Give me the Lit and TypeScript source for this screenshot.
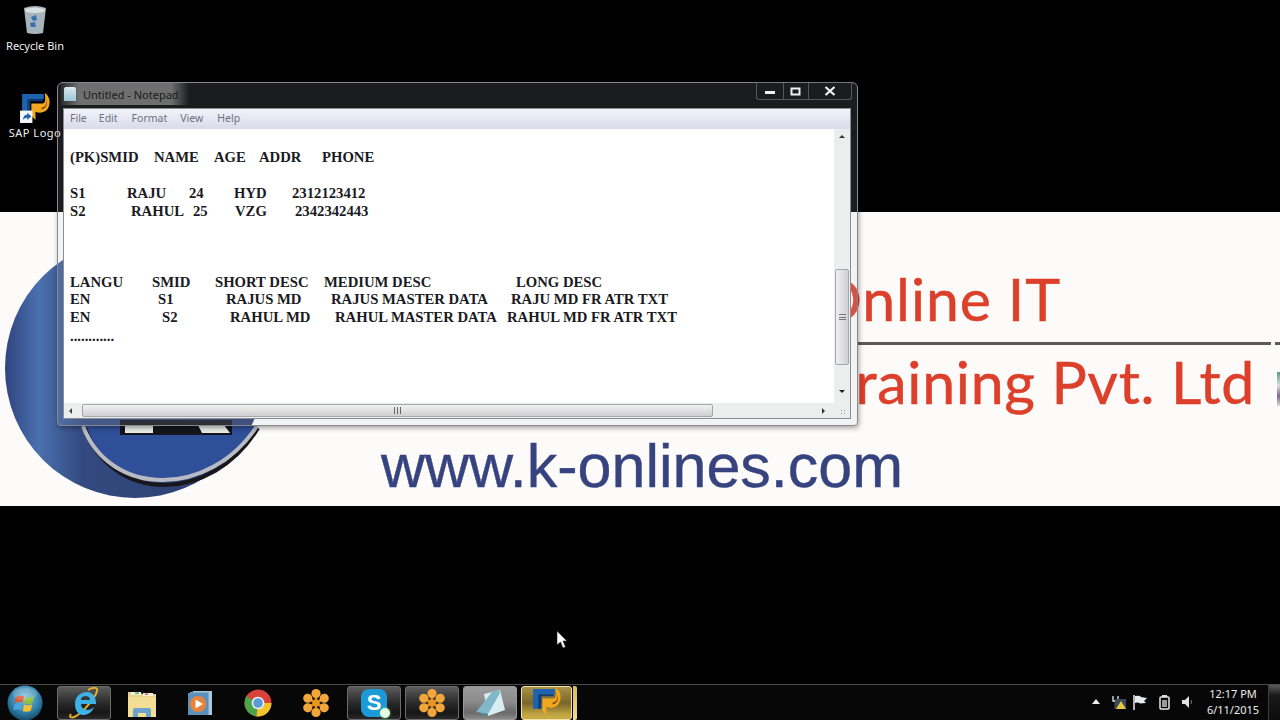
import { LitElement, html, css, svg } from "lit";
import { customElement } from "lit/decorators.js";

type Row = { top: number; cells: [number, string][] };
const ROWS: Row[] = [
  { top: -1, cells: [[70, "(PK)SMID"], [154, "NAME"], [214, "AGE"], [259, "ADDR"], [322, "PHONE"]] },
  { top: 18, cells: [[70, "S1"], [127, "RAJU"], [189, "24"], [234, "HYD"], [292, "2312123412"]] },
  { top: 0, cells: [[70, "S2"], [131, "RAHUL"], [193, "25"], [235, "VZG"], [295, "2342342443"]] },
  { top: 53, cells: [[70, "LANGU"], [152, "SMID"], [215, "SHORT DESC"], [324, "MEDIUM DESC"], [516, "LONG DESC"]] },
  { top: -1, cells: [[70, "EN"], [158, "S1"], [226, "RAJUS MD"], [331, "RAJUS MASTER DATA"], [511, "RAJU MD FR ATR TXT"]] },
  { top: 0, cells: [[70, "EN"], [162, "S2"], [230, "RAHUL MD"], [335, "RAHUL MASTER DATA"], [507, "RAHUL MD FR ATR TXT"]] },
  { top: 1, cells: [[70, "............"]] },
];

const flower = svg`<svg width="30" height="30" viewBox="0 0 30 30">
  ${[0, 60, 120, 180, 240, 300].map((a) => svg`<g transform="rotate(${a} 15 15)"><rect x="13.6" y="6" width="2.8" height="9" fill="#d98a1e"/><circle cx="15" cy="5.5" r="4.6" fill="#f0a63a"/></g>`)}
  <circle cx="15" cy="15" r="3.6" fill="#e8951f"/></svg>`;

const orb = svg`<svg width="36" height="36" viewBox="0 0 36 36">
  <defs><radialGradient id="o" cx=".5" cy=".35" r=".7"><stop offset="0" stop-color="#8fc6e0"/><stop offset=".6" stop-color="#2f7fa8"/><stop offset="1" stop-color="#123f5e"/></radialGradient></defs>
  <circle cx="18" cy="18" r="17.5" fill="url(#o)"/>
  <path d="M9 12q4-2 8-.5l-1.300 6q-4-1.500-8 .5z" fill="#e2572c"/>
  <path d="M18.500 11.800q4 1.500 8.500-.3l-1.500 6.500q-4 1.700-8.200.2z" fill="#8fc23c"/>
  <path d="M7.500 19.500q4-2 8-.5l-1.300 6q-4-1.500-8 .5z" fill="#4aa8dc"/>
  <path d="M17 19.700q4 1.500 8.200-.2l-1.400 6.300q-4 1.700-8.200.2z" fill="#f4c22c"/>
  <ellipse cx="18" cy="9" rx="12" ry="6.500" fill="#fff" opacity=".16"/></svg>`;

const ie = svg`<svg width="34" height="32" viewBox="0 0 34 32">
  <path d="M4 27C1 31 6 32 12 27 20 21 29 9 30 4 31 0 26 0 21 3" fill="none" stroke="#e0b030" stroke-width="2"/>
  <path d="M8 17C8 9 14 5 20 5c6 0 9 5 9 12H14c0 6 8 8 13 3-2 6-7 8-11 8-5 0-8-5-8-11zM14 13h9c0-3-2-4-4.500-4S14 10 14 13z" fill="#3db2e6"/></svg>`;

const folder = svg`<svg width="32" height="32" viewBox="0 0 32 32">
  <path d="M2 5h12l2 2h14v23H2z" fill="#e9d28c"/>
  <rect x="5" y="5" width="10" height="3" fill="#eef0e0"/><rect x="9" y="5.500" width="4" height="1.500" fill="#5cab58"/>
  <rect x="17" y="6" width="10" height="3" fill="#f2f2e6"/><rect x="19" y="6.500" width="3" height="1.500" fill="#d8603c"/>
  <rect x="2" y="10" width="28" height="20" fill="#f4dd94"/>
  <path d="M7 30v-7q0-2 2-2h14q2 0 2 2v7h-5v-4h-8v4z" fill="#6ba4cc"/></svg>`;

const wmp = svg`<svg width="28" height="28" viewBox="0 0 28 28">
  <rect x="7" y="2" width="19" height="24" fill="#a9c6dc"/><rect x="4" y="3" width="19" height="23" fill="#7fa9c9"/>
  <rect x="2" y="4" width="20" height="22" fill="#5d90b8"/>
  <circle cx="12" cy="15" r="8" fill="#e8843a"/><path d="M9.500 10.500l7.500 4.500-7.500 4.500z" fill="#fff"/></svg>`;

const chrome = svg`<svg width="28" height="28" viewBox="0 0 28 28">
  <circle cx="14" cy="14" r="13.500" fill="#d8423a"/>
  <path d="M14 14L2.300 7.300A13.500 13.500 0 0 0 12.500 27.400z" fill="#4ba34a"/>
  <path d="M14 14H27.500A13.500 13.500 0 0 1 12.500 27.400z" fill="#f0c52c"/>
  <circle cx="14" cy="14" r="6.300" fill="#eef2f6"/><circle cx="14" cy="14" r="4.800" fill="#5c9ad8"/></svg>`;

const notepad = svg`<svg width="34" height="30" viewBox="0 0 34 30">
  <path d="M11 6L27 2l5 20-17 6z" fill="#d8ecf2"/>
  <path d="M3 24L19 4l7-2 1 3-12 21z" fill="#7fb8c8"/>
  <path d="M3 24l12 2-1 2z" fill="#4d8a9c"/></svg>`;

const sapLogo = (s: number, shortcut = false) => svg`<svg width="${s}" height="${s}" viewBox="0 0 32 32">
  <path d="M3 3h21v5H9v14H3z" fill="#1d63b0"/>
  <path d="M8 8h15v2H11v12H8z" fill="#0f3c78"/>
  <path d="M25 2c5 3 6 10 3 15-2 4-8 5-12 3v8l-4-4V12h11c2 0 3-2 2-10z" fill="#f2a81e"/>
  <path d="M22 16c3 0 5-3 5-8 1 5-1 9-5 10z" fill="#7a3d08"/>
  ${shortcut ? svg`<rect x="1" y="19" width="12" height="12" fill="#f4f6fa"/><path d="M4 28c0-4 2-5 4-5v-2l4 3.500-4 3.500v-2c-1 0-3 .5-4 2z" fill="#1d63b0"/>` : ""}</svg>`;

@customElement("app-root")
export class AppRoot extends LitElement {
  static styles = css`
    :host { display: flex; flex-direction: column; width: 1280px; height: 720px; overflow: hidden; background: #000; font-family: "Noto Sans", sans-serif; }
    .desktop { position: relative; height: 684px; padding-top: 212px; box-sizing: border-box; }

    .banner { position: relative; height: 294px; background: #fcfbfa; overflow: hidden; }
    .logo { position: absolute; left: 0; top: 0; }
    .red { position: absolute; color: #dc3f2a; font-family: Lato, sans-serif; font-size: 59px; line-height: 70px; white-space: nowrap; -webkit-text-stroke: .5px #dc3f2a; }
    .r1 { top: 52px; right: 219px; letter-spacing: .9px; }
    .r2 { top: 135px; right: 25px; letter-spacing: .7px; }
    .tee { margin-right: 14px; }
    .rule { position: absolute; left: 858px; right: 9px; top: 130px; height: 3px; background: #5a5a58; }
    .rule2 { position: absolute; left: 1275px; right: 0; top: 130px; height: 3px; background: #5a5a58; }
    .crumb { position: absolute; left: 1277px; top: 160px; width: 3px; height: 34px; background: linear-gradient(#5a9a8a, #ddd 40%, #7a6a90 70%, #d8d8d8); }
    .url { position: absolute; left: 381px; top: 219px; color: #37437f; font-family: "Liberation Sans", sans-serif; font-size: 61px; line-height: 70px; white-space: nowrap; -webkit-text-stroke: .4px #37437f; }

    .dicon { position: absolute; display: flex; flex-direction: column; align-items: center; width: 70px; color: #f0f0f0; font-size: 11px; line-height: 15px; text-shadow: 0 1px 2px #000; }
    .bin { left: 0; top: 5px; gap: 3px; }
    .sap { left: 0; top: 91px; gap: 1px; letter-spacing: .5px; }

    .win { position: absolute; left: 57px; top: 82px; width: 801px; height: 344px; box-sizing: border-box; border: 1px solid #85888c; border-radius: 6px 6px 4px 4px; background: rgba(190, 200, 212, .14); box-shadow: 1px 2px 5px rgba(0,0,0,.35); display: flex; flex-direction: column; padding: 0 6px 6px 5px; }
    .title { height: 25px; flex: none; display: flex; align-items: flex-start; position: relative; }
    .glow { display: flex; align-items: center; gap: 7px; height: 22px; margin-left: -2px; padding: 0 10px 0 3px; background: linear-gradient(90deg, rgba(110,110,110,.2), rgba(125,125,125,.85) 14%, rgba(125,125,125,.85) 86%, rgba(90,90,90,0)); }
    .nicon { width: 12px; height: 14px; background: linear-gradient(#cfe4ec, #9cc6d6); border-top: 2px solid #dfe8ea; border-radius: 2px 2px 0 0; box-sizing: border-box; }
    .ttext { color: #1a1a1a; font-size: 11px; white-space: nowrap; margin-top: 1px; }
    .caps { position: absolute; right: -1px; top: -1px; display: flex; height: 18px; border: 1px solid #55585c; border-top-color: #777; border-radius: 0 0 3px 3px; box-sizing: border-box; }
    .cap { display: flex; align-items: center; justify-content: center; height: 100%; border-right: 1px solid #55585c; box-sizing: border-box; }
    .cap:last-child { border-right: 0; }
    .client { flex: 1; min-height: 0; border: 1px solid #8a8e94; background: #fff; display: flex; flex-direction: column; }
    .menu { height: 20px; flex: none; display: flex; align-items: center; padding-bottom: 2px; font-size: 10.500px; color: #6e7280; background: linear-gradient(#f2f3fa, #d8dbe9); box-sizing: border-box; }
    .body { flex: 1; min-height: 0; display: flex; }
    .text { flex: 1; min-width: 0; padding-top: 20px; box-sizing: border-box; font-family: "Liberation Serif", serif; font-weight: 700; font-size: 14.700px; line-height: 18px; color: #1a1a22; }
    .row { display: flex; white-space: pre; }
    .row span { flex: none; }
    .vbar { width: 16px; flex: none; background: #eceeee; position: relative; display: flex; flex-direction: column; align-items: center; }
    .arrow-u { margin-top: 6px; width: 0; height: 0; border: 3px solid transparent; border-top: 0; border-bottom: 3px solid #333; }
    .arrow-d { margin-top: 25px; width: 0; height: 0; border: 3px solid transparent; border-bottom: 0; border-top: 3px solid #222; }
    .vthumb { margin-top: 131px; width: 14px; height: 96px; box-sizing: border-box; border: 1px solid #a4a8ac; border-radius: 2px; background: linear-gradient(90deg, #f0f0f0, #d0d0d2); display: flex; align-items: center; justify-content: center; }
    .grip-h { width: 7px; height: 6px; border-top: 1px solid #777; border-bottom: 1px solid #777; box-sizing: border-box; background: linear-gradient(#777,#777) center/100% 1px no-repeat; }
    .hbar { height: 15px; flex: none; background: #eceeee; display: flex; align-items: center; position: relative; }
    .arrow-l { margin-left: 5px; width: 0; height: 0; border: 3px solid transparent; border-left: 0; border-right: 3px solid #444; }
    .hthumb { margin-left: 10px; width: 631px; height: 13px; box-sizing: border-box; border: 1px solid #a4a8ac; border-radius: 2px; background: linear-gradient(#f2f2f2, #cfcfd1); display: flex; align-items: center; justify-content: center; }
    .grip-v { width: 7px; height: 7px; border-left: 1px solid #666; border-right: 1px solid #666; box-sizing: border-box; background: linear-gradient(#666,#666) center/1px 100% no-repeat; }
    .arrow-r { margin-left: 109px; width: 0; height: 0; border: 3px solid transparent; border-right: 0; border-left: 3px solid #333; }
    .sizer { position: absolute; right: 3px; bottom: 2px; width: 7px; height: 7px; background: radial-gradient(circle, #999 40%, transparent 45%) 0 0/3px 3px; }

    .cursor { position: absolute; left: 556px; top: 630px; }

    .taskbar { height: 36px; flex: none; box-sizing: border-box; border-top: 1px solid #4a4a4a; background: #070707; display: flex; align-items: center; position: relative; }
    .start { width: 36px; margin-left: 7px; display: flex; }
    .tb { width: 54px; height: 34px; margin-left: 4px; flex: none; display: flex; align-items: center; justify-content: center; box-sizing: border-box; border-radius: 3px; }
    .tb.on { border: 1px solid #6c6c6c; background: linear-gradient(#5c5c5c, #2e2e2e 45%, #161616 80%, #2a2a2a); }
    .tb.lit { border-color: #9a9a9a; background: linear-gradient(#9a9a9a, #8c8c8c 45%, #6a6a6a 80%, #8a8a8a); }
    .tb.act { width: 51px; border-color: #f0e2a8; background: linear-gradient(#a89246, #7a662a 50%, #c8aa44 90%); }
    .tb.first { margin-left: 14px; }
    .sliver { width: 4px; height: 34px; margin-left: 1px; background: linear-gradient(#d8b860, #f0dc9a); border-radius: 0 2px 2px 0; }
    .sk { width: 26px; height: 28px; border-radius: 8px; background: #1c9ad8; color: #fff; font: 700 22px/28px "Liberation Sans", sans-serif; text-align: center; position: relative; }
    .sk i { position: absolute; right: -3px; bottom: -1px; width: 10px; height: 10px; border-radius: 50%; background: #e6fbe6; box-shadow: 0 0 3px #3fd06a; }
    .tray { margin-left: auto; display: flex; align-items: center; position: relative; height: 100%; width: 186px; }
    .clock { position: absolute; left: 106px; top: 1px; width: 66px; color: #ececec; font-size: 11px; line-height: 16px; text-align: center; }
    .show { position: absolute; right: 0; top: 0; bottom: 0; width: 11px; border-left: 1px solid #3c3c3c; background: linear-gradient(#5a5a5a, #1a1a1a 30%, #0c0c0c); }
    .ti { position: absolute; top: 10px; }
    .t0 { left: -2px; top: 14px; }
    .t1 { left: 18px; }
    .t2 { left: 39px; }
    .t3 { left: 65px; }
    .t4 { left: 87px; }
  `;

  private row(r: Row) {
    return html`<div class="row" style="margin-top:${r.top}px">
      ${r.cells.map(([x, t], i) => {
        const next = r.cells[i + 1];
        const w = next ? next[0] - x : 0;
        const offset = i === 0 ? x - 64 : 0;
        return html`<span style="${next ? `width:${w}px;` : ""}${offset ? `margin-left:${offset}px` : ""}">${t}</span>`;
      })}
    </div>`;
  }

  render() {
    const menu: [string, number][] = [["File", 6], ["Edit", 35], ["Format", 67], ["View", 116], ["Help", 153]];
    return html`
      <div class="desktop">
        <div class="banner">
          <svg class="logo" width="300" height="294" viewBox="0 0 300 294">
            <defs>
              <linearGradient id="lg" x1="0" x2="1" y1="0" y2="0">
                <stop offset="0" stop-color="#2f4480"/><stop offset=".13" stop-color="#4a70ae"/><stop offset=".3" stop-color="#33497f"/><stop offset="1" stop-color="#2a3c6c"/>
              </linearGradient>
            </defs>
            <circle cx="135" cy="156" r="130" fill="url(#lg)"/>
            <path d="M83 214C110 286 210 286 257 214Z" fill="#2f4f98"/>
            <rect x="120" y="208" width="112" height="15" fill="#15151d"/>
            <rect x="125" y="213" width="28" height="8" fill="#ecece6"/>
            <path d="M198 213h26l6 8h-28z" fill="#ecece6"/>
            <path d="M85 216C112 292 212 292 258 216" fill="none" stroke="#17171c" stroke-width="4"/>
            <path d="M83 214C110 286 210 286 257 214" fill="none" stroke="#b8bcc2" stroke-width="4"/>
          </svg>
          <div class="red r1">Online IT</div>
          <div class="rule"></div><div class="rule2"></div>
          <div class="red r2"><span class="tee">T</span>raining Pvt. Ltd</div>
          <div class="crumb"></div>
          <div class="url">www.k-onlines.com</div>
        </div>

        <div class="dicon bin">
          <svg width="26" height="30" viewBox="0 0 26 30">
            <path d="M2 3q11-4 22 0l-3 25q-8 2-16 0z" fill="#a8b4bc"/>
            <path d="M3 4q10-3 20 0l-1 3q-9 2-18 0z" fill="#d8dee2"/>
            <path d="M9 12l5-2 1 5-4 1zM8 18l5-1 1 5-5 0z" fill="#3a6fb0"/>
          </svg>
          <span>Recycle Bin</span>
        </div>
        <div class="dicon sap">${sapLogo(33, true)}<span>SAP Logo</span></div>

        <div class="win">
          <div class="title">
            <div class="glow"><div class="nicon"></div><div class="ttext">Untitled - Notepad</div></div>
            <div class="caps">
              <div class="cap" style="width:27px"><svg width="12" height="8" viewBox="0 0 12 8"><rect x="1" y="4" width="10" height="3" fill="#eef0f2"/></svg></div>
              <div class="cap" style="width:25px"><svg width="12" height="9" viewBox="0 0 12 9"><rect x="1.500" y="1.500" width="8" height="6" fill="none" stroke="#f0f0f0" stroke-width="2"/></svg></div>
              <div class="cap" style="width:42px"><svg width="12" height="10" viewBox="0 0 12 10"><path d="M1.500 1l9 8M10.500 1l-9 8" stroke="#f4f4f4" stroke-width="2.200"/></svg></div>
            </div>
          </div>
          <div class="client">
            <div class="menu">${menu.map(([m, x], i) => html`<span style="margin-left:${x - (i ? menu[i - 1][1] + [0, 17, 18, 36, 23][i] : 0)}px">${m}</span>`)}</div>
            <div class="body">
              <div class="text">${ROWS.map((r) => this.row(r))}</div>
              <div class="vbar">
                <div class="arrow-u"></div>
                <div class="vthumb"><div class="grip-h"></div></div>
                <div class="arrow-d"></div>
              </div>
            </div>
            <div class="hbar">
              <div class="arrow-l"></div>
              <div class="hthumb"><div class="grip-v"></div></div>
              <div class="arrow-r"></div>
              <div class="sizer"></div>
            </div>
          </div>
        </div>

        <svg class="cursor" width="13" height="19" viewBox="0 0 13 19"><path d="M1 1v14l3.500-3 2.500 6 2.500-1-2.500-6H11z" fill="#fff" stroke="#222" stroke-width=".6"/></svg>
      </div>

      <div class="taskbar">
        <div class="start">${orb}</div>
        <div class="tb on first">${ie}</div>
        <div class="tb">${folder}</div>
        <div class="tb">${wmp}</div>
        <div class="tb">${chrome}</div>
        <div class="tb">${flower}</div>
        <div class="tb on"><div class="sk">S<i></i></div></div>
        <div class="tb on">${flower}</div>
        <div class="tb on lit">${notepad}</div>
        <div class="tb on act">${sapLogo(33)}</div>
        <div class="sliver"></div>
        <div class="tray">
          <svg class="ti t0" width="8" height="5" viewBox="0 0 8 5"><path d="M0 5l4-5 4 5z" fill="#eee"/></svg>
          <svg class="ti t1" width="14" height="15" viewBox="0 0 14 15"><path d="M1 1v5h5V1M3.500 6v8" fill="none" stroke="#e8e8e0" stroke-width="1.300"/><rect x="3" y="4" width="11" height="10" fill="#3a4a5a"/><path d="M4 14l5-8 5 8z" fill="#e6c83a"/></svg>
          <svg class="ti t2" width="15" height="15" viewBox="0 0 15 15"><path d="M1 0v15" stroke="#eee" stroke-width="1.500"/><path d="M2 1q5-1 6 1l6 1-3 3 2 2-6 .5q-2-1.500-5-.5z" fill="#e8eaec"/></svg>
          <svg class="ti t3" width="11" height="15" viewBox="0 0 11 15"><rect x="3" y="0" width="5" height="2" fill="#ddd"/><rect x="1" y="2" width="9" height="12" rx="1" fill="none" stroke="#e8e8e8" stroke-width="1.500"/><rect x="3" y="5" width="5" height="7" fill="#9a9a9a"/></svg>
          <svg class="ti t4" width="12" height="14" viewBox="0 0 12 14"><path d="M1 5h3l4-4v12L4 9H1z" fill="#e4e4e4"/><path d="M10 5q1 2 0 4" fill="none" stroke="#777"/></svg>
          <div class="clock">12:17 PM<br />6/11/2015</div>
          <div class="show"></div>
        </div>
      </div>
    `;
  }
}
